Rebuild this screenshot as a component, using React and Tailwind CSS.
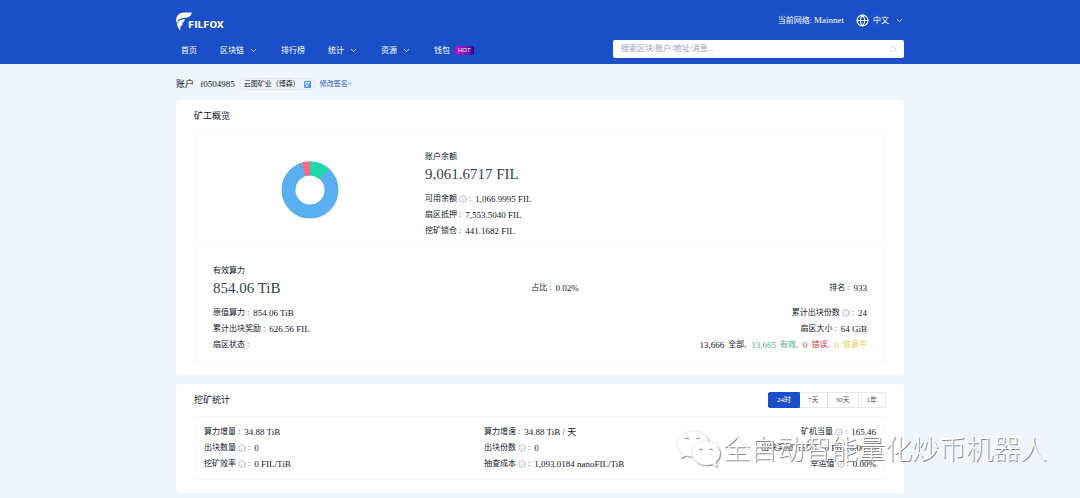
import React, { useState } from 'react';
import { ChevronDown, Globe, Info, Search } from 'lucide-react';

const navItems = [
  { label: '首页' },
  { label: '区块链', menu: true },
  { label: '排行榜' },
  { label: '统计', menu: true },
  { label: '资源', menu: true },
  { label: '钱包', hot: true },
];

const balances = [
  { label: '可用余额', value: '1,066.9995 FIL', info: true },
  { label: '扇区抵押', value: '7,553.5040 FIL' },
  { label: '挖矿锁仓', value: '441.1682 FIL' },
];

const sectors = [
  { count: '13,666', label: '全部,', color: 'text-gray-900' },
  { count: '13,665', label: '有效,', color: 'text-[#4cae7c]' },
  { count: '0', label: '错误,', color: 'text-[#d9363e]' },
  { count: '0', label: '恢复中', color: 'text-[#ecc94b]' },
];

const miningStats = [
  [
    { label: '算力增量', value: '34.88 TiB' },
    { label: '出块数量', value: '0', info: true },
    { label: '挖矿效率', value: '0 FIL/TiB', info: true },
  ],
  [
    { label: '算力增速', value: '34.88 TiB / 天' },
    { label: '出块份数', value: '0', info: true },
    { label: '抽查成本', value: '1,093.0184 nanoFIL/TiB', info: true },
  ],
  [
    { label: '矿机当量', value: '165.46', info: true },
    { label: '出块奖励 (占比)', value: '0 FIL (0.00%)' },
    { label: '幸运值', value: '0.00%', info: true },
  ],
];

const ranges = ['24时', '7天', '30天', '1年'];

const Stat = ({ label, value, info }) => (
  <p className="flex h-4 items-center gap-1 whitespace-nowrap">
    <span className="flex items-center gap-0.5">
      {label}
      {info && <Info className="size-2 text-gray-400" strokeWidth={2} />}
      <span>:</span>
    </span>
    <span className="text-[9px]">{value}</span>
  </p>
);

const Logo = () => (
  <a href="#" aria-label="Filfox" className="flex h-5 items-end text-white">
    <svg viewBox="0 0 16 19" className="h-[19px] w-4" fill="currentColor">
      <path d="M0 9.5C0 3.5 3.5 0.5 8 0.5H15.800C15.300 3.800 13 5.600 10 5.800C6 6 3 6.5 0.800 10.500Z" />
      <path d="M1 11.500C3 8 6 7.300 9 7.300C8.600 9.600 7 10.800 5 11.300C6 11.400 6.700 11.400 7.300 11.300C6.700 13 5.500 13.700 4.700 14.200C4.200 15.500 4.200 17 4.500 18.500C2.500 17 1.200 14.500 1 11.500Z" />
    </svg>
    <span className="-ml-1 font-['DejaVu_Sans',sans-serif] text-[9px] leading-3 font-bold">FILFOX</span>
  </a>
);

const Donut = () => (
  <svg viewBox="0 0 58 58" className="size-[58px]" fill="none" strokeWidth="14">
    <circle cx="29" cy="29" r="21.5" stroke="#5aaff0" />
    <circle cx="29" cy="29" r="21.5" stroke="#1fd6ad" pathLength="100" strokeDasharray="11.8 88.2" transform="rotate(-90 29 29)" />
    <circle cx="29" cy="29" r="21.5" stroke="#f76c85" pathLength="100" strokeDasharray="4.9 95.1" transform="rotate(-107.6 29 29)" />
  </svg>
);

const Header = () => (
  <header className="bg-[#1b4fc9] text-white">
    <div className="mx-auto flex h-16 max-w-[728px] flex-col">
      <div className="flex h-10 items-center justify-between pt-px">
        <Logo />
        <div className="flex items-center">
          <span>
            当前网络: <span className="text-[9px]">Mainnet</span>
          </span>
          <button className="ml-3 flex items-center">
            <Globe className="mr-1 size-[13px]" strokeWidth={2} />
            中文
            <ChevronDown className="ml-1.5 size-[9px]" strokeWidth={2} />
          </button>
        </div>
      </div>
      <div className="flex items-center justify-between">
        <nav className="flex items-center pt-[3px] pl-[5px]">
          {navItems.map((item) => (
            <a key={item.label} href="#" className="mr-[23px] flex items-center whitespace-nowrap">
              {item.label}
              {item.menu && <ChevronDown className="ml-[5px] size-[9px]" strokeWidth={2} />}
              {item.hot && (
                <span className="ml-[5px] h-[9px] rounded-xs bg-linear-to-r from-[#c800c8] to-[#3c0096] px-[3px] font-['Liberation_Sans',sans-serif] text-[6px] leading-[9px]">
                  HOT
                </span>
              )}
            </a>
          ))}
        </nav>
        <label className="flex h-[18px] w-[291px] items-center rounded-xs bg-white px-[7px] pl-2">
          <input
            type="text"
            aria-label="搜索"
            placeholder="搜索区块/账户/地址/消息..."
            className="min-w-0 flex-1 text-gray-800 outline-none placeholder:text-gray-400"
          />
          <Search className="size-2 text-gray-300" strokeWidth={2} />
        </label>
      </div>
    </div>
  </header>
);

const Overview = () => (
  <section className="rounded-sm bg-white px-[18px] pt-2 pb-[13px]">
    <h2 className="h-6 text-[9px] leading-4">矿工概览</h2>
    <div className="border border-[#f5f6f8]">
      <div className="grid h-[114px] grid-cols-3 border-b border-[#f5f6f8]">
        <div className="flex items-center justify-center">
          <Donut />
        </div>
        <div className="pt-4">
          <p className="h-4 leading-4">账户余额</p>
          <p className="mb-2 text-[15px] leading-[18px] text-gray-700">9,061.6717 FIL</p>
          {balances.map((item) => (
            <Stat key={item.label} {...item} />
          ))}
        </div>
      </div>
      <div className="px-[18px] pt-4 pb-2">
        <p className="h-4 leading-4">有效算力</p>
        <div className="mb-2 flex items-center justify-between">
          <p className="text-[15px] leading-[18px] text-gray-700">854.06 TiB</p>
          <Stat label="占比" value="0.02%" />
          <Stat label="排名" value="933" />
        </div>
        <div className="flex justify-between">
          <div>
            <Stat label="原值算力" value="854.06 TiB" />
            <Stat label="累计出块奖励" value="626.56 FIL" />
            <Stat label="扇区状态" value="" />
          </div>
          <div className="flex flex-col items-end">
            <Stat label="累计出块份数" value="24" info />
            <Stat label="扇区大小" value="64 GiB" />
            <p className="flex h-4 items-center gap-[5px]">
              {sectors.map((item) => (
                <span key={item.label} className={`flex items-center gap-1 ${item.color}`}>
                  <span className="text-[9px]">{item.count}</span>
                  {item.label}
                </span>
              ))}
            </p>
          </div>
        </div>
      </div>
    </div>
  </section>
);

const MiningStats = () => {
  const [range, setRange] = useState('24时');

  return (
    <section className="relative rounded-sm bg-white px-[18px] pt-2 pb-[13px]">
      <div className="flex h-6 items-start justify-between">
        <h2 className="text-[9px] leading-4">挖矿统计</h2>
        <div className="flex">
          {ranges.map((item) => (
            <button
              key={item}
              onClick={() => setRange(item)}
              className={`h-4 border px-2 text-[7px] ${
                range === item
                  ? 'rounded-l-xs border-[#1b4fc9] bg-[#1b4fc9] text-white'
                  : 'border-l-0 border-gray-200 text-gray-600'
              }`}
            >
              {item}
            </button>
          ))}
        </div>
      </div>
      <div className="grid grid-cols-[5fr_4fr_3fr] border border-[#f5f6f8] px-[9px] py-[7px]">
        {miningStats.map((column, idx) => (
          <div key={idx} className={idx === 2 ? 'flex flex-col items-end' : ''}>
            {column.map((item) => (
              <Stat key={item.label} {...item} />
            ))}
          </div>
        ))}
      </div>
      {/* Channel signature laid over the card */}
      <div className="pointer-events-none absolute top-[46px] left-[500px] flex items-center gap-px whitespace-nowrap">
        <svg viewBox="0 0 46 40" className="h-10 w-[46px] drop-shadow-[1px_1px_0_#999]" fill="white" stroke="#dcdcdc" strokeWidth="0.6">
          <path d="M17 1C8 1 1 6.5 1 14C1 18 3 21 6 23.5L4.5 28L10 25.5C12 26.2 14 26.5 17 26.5C26 26.5 33 21 33 14C33 6.5 26 1 17 1Z" />
          <path d="M30 11C22 11 16 16.5 16 23C16 30 22 35 30 35C32 35 34 34.6 36 34L41 37L39.5 32C42 30 44 27 44 23C44 16.5 38 11 30 11Z" />
          <path d="M9 9q2-2 4 0M20 9q2-2 4 0M23 20q2-2 4 0M33 20q2-2 4 0" fill="none" stroke="#888" strokeWidth="1" />
        </svg>
        <span className="text-[27px] leading-10 font-light text-white [text-shadow:1px_1px_0_#8c8c8c]">全自动智能量化炒币机器人</span>
      </div>
    </section>
  );
};

export default function App() {
  return (
    <div className="min-h-screen overflow-hidden bg-[#f0f4fd] pb-1 font-['Liberation_Serif','Noto_Sans_CJK_SC',serif] text-[8px] leading-3 text-gray-900">
      <Header />
      <main className="mx-auto max-w-[728px]">
        <div className="flex h-9 items-center pt-1">
          <h1 className="text-[9px]">
            账户 <span className="ml-1">f0504985</span>
          </h1>
          <span className="ml-1 flex h-3 items-center gap-1 rounded-full border border-gray-200 px-1 text-[7px]">
            云图矿业（博森）
            <span className="flex size-[7px] items-center justify-center rounded-[1px] bg-[#4a9be8]">
              <svg viewBox="0 0 8 8" className="size-[5px]" fill="none" stroke="white" strokeWidth="1.5">
                <path d="M1 1V4L3 7L7 1Z" />
              </svg>
            </span>
          </span>
          <a href="#" className="ml-1 text-[7px] text-[#1b4fc9]">修改签名&gt;</a>
        </div>
        <div className="flex flex-col gap-[9px]">
          <Overview />
          <MiningStats />
        </div>
      </main>
    </div>
  );
}
